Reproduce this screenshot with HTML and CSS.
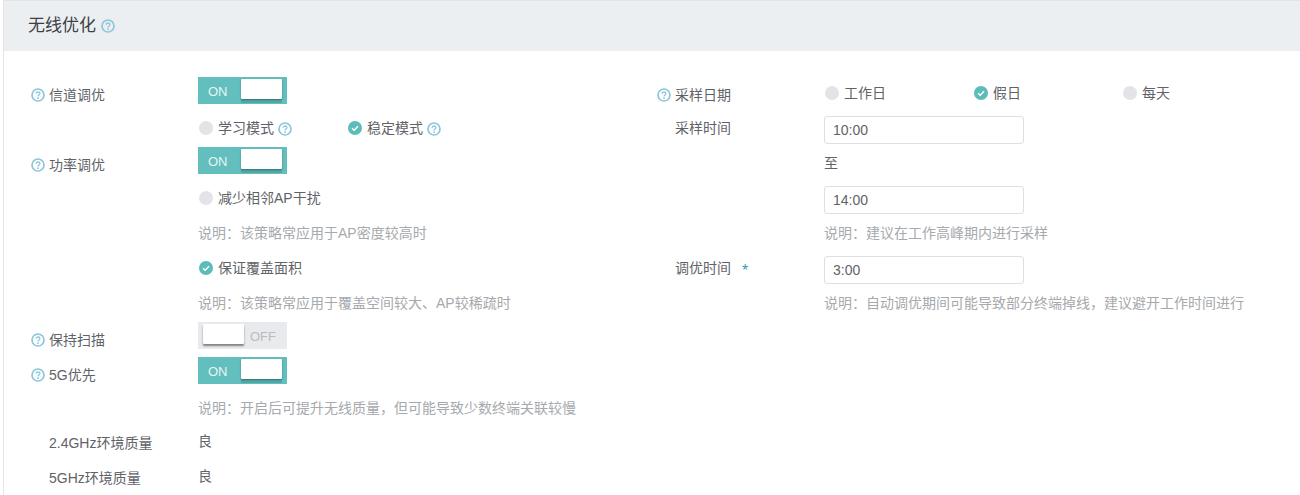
FILE: index.html
```html
<!DOCTYPE html>
<html lang="zh">
<head>
<meta charset="utf-8">
<title>无线优化</title>
<link rel="stylesheet" href="styles.css">
</head>
<body>
<svg class="defs" width="0" height="0" aria-hidden="true">
  <symbol id="q" viewBox="0 0 14 14">
    <circle cx="7" cy="7" r="6" fill="none" stroke="currentColor" stroke-width="1.7"/>
    <path d="M5.1 5.7C5.1 4.6 6 4 7 4s1.9.6 1.9 1.6c0 1.4-1.9 1.4-1.9 2.9" fill="none" stroke="currentColor" stroke-width="1.3"/>
    <circle cx="7" cy="10.2" r=".9" fill="currentColor"/>
  </symbol>
  <symbol id="check" viewBox="0 0 14 14">
    <circle cx="7" cy="7" r="7" fill="currentColor"/>
    <path d="M4 7.2l2.2 2L10 5.2" fill="none" stroke="#fff" stroke-width="1.4"/>
  </symbol>
</svg>
<main class="panel">
  <header class="head">
    <h1 class="title">无线优化</h1>
    <svg class="q q-title"><use href="#q"/></svg>
  </header>
  <div class="form">
    <section class="col">
      <div class="row">
        <div class="label low"><svg class="q"><use href="#q"/></svg>信道调优</div>
        <div class="switch on"><span class="state">ON</span><span class="knob"></span></div>
      </div>
      <div class="row">
        <div class="label"></div>
        <div class="radios">
          <div class="radio"><span class="dot"></span>学习模式<svg class="q q-inline"><use href="#q"/></svg></div>
          <div class="radio"><svg class="tick"><use href="#check"/></svg>稳定模式<svg class="q q-inline"><use href="#q"/></svg></div>
        </div>
      </div>
      <div class="row">
        <div class="label low"><svg class="q"><use href="#q"/></svg>功率调优</div>
        <div class="switch on"><span class="state">ON</span><span class="knob"></span></div>
      </div>
      <div class="row">
        <div class="label"></div>
        <div class="radio"><span class="dot"></span>减少相邻AP干扰</div>
      </div>
      <div class="row">
        <div class="label"></div>
        <p class="note">说明：该策略常应用于AP密度较高时</p>
      </div>
      <div class="row">
        <div class="label"></div>
        <div class="radio"><svg class="tick"><use href="#check"/></svg>保证覆盖面积</div>
      </div>
      <div class="row">
        <div class="label"></div>
        <p class="note">说明：该策略常应用于覆盖空间较大、AP较稀疏时</p>
      </div>
      <div class="row">
        <div class="label low"><svg class="q"><use href="#q"/></svg>保持扫描</div>
        <div class="switch off"><span class="knob"></span><span class="state">OFF</span></div>
      </div>
      <div class="row">
        <div class="label low"><svg class="q"><use href="#q"/></svg>5G优先</div>
        <div class="switch on"><span class="state">ON</span><span class="knob"></span></div>
      </div>
      <div class="row">
        <div class="label"></div>
        <p class="note">说明：开启后可提升无线质量，但可能导致少数终端关联较慢</p>
      </div>
      <div class="row">
        <div class="label plain">2.4GHz环境质量</div>
        <div class="value">良</div>
      </div>
      <div class="row">
        <div class="label plain">5GHz环境质量</div>
        <div class="value">良</div>
      </div>
    </section>
    <section class="col">
      <div class="row">
        <div class="label low"><svg class="q"><use href="#q"/></svg>采样日期</div>
        <div class="radios">
          <div class="radio"><span class="dot"></span>工作日</div>
          <div class="radio"><svg class="tick"><use href="#check"/></svg>假日</div>
          <div class="radio"><span class="dot"></span>每天</div>
        </div>
      </div>
      <div class="row">
        <div class="label plain-mid">采样时间</div>
        <input class="input" type="text" value="10:00">
      </div>
      <div class="row">
        <div class="label"></div>
        <div class="text">至</div>
      </div>
      <div class="row">
        <div class="label"></div>
        <input class="input" type="text" value="14:00">
      </div>
      <div class="row">
        <div class="label"></div>
        <p class="note">说明：建议在工作高峰期内进行采样</p>
      </div>
      <div class="row">
        <div class="label plain-mid">调优时间<span class="star">*</span></div>
        <input class="input" type="text" value="3:00">
      </div>
      <div class="row">
        <div class="label"></div>
        <p class="note">说明：自动调优期间可能导致部分终端掉线，建议避开工作时间进行</p>
      </div>
    </section>
  </div>
</main>
</body>
</html>
```
FILE: styles.css
```css
html, body {
  margin: 0;
  height: 495px;
  overflow: hidden;
  background: #fff;
}
body {
  padding-left: 3px;
  font-family: "Liberation Sans", "Noto Sans CJK SC", sans-serif;
  font-size: 14px;
  line-height: 20px;
  color: #5f6368;
}
.defs {
  position: absolute;
}
.panel {
  border-top: 1px solid #e2e4e7;
  border-left: 1px solid #e2e4e7;
}
.head {
  display: flex;
  align-items: center;
  height: 50px;
  padding-left: 24px;
  background: #eceff2;
}
.title {
  margin: 0;
  font-size: 17px;
  font-weight: 400;
  line-height: 24px;
  color: #3c3f44;
}
.q {
  flex: none;
  width: 14px;
  height: 14px;
  color: #8cc6dd;
}
.q-title {
  margin-left: 5px;
}
.q-inline {
  margin: 2px 0 0 4px;
}
.form {
  display: grid;
  grid-template-columns: 626px 1fr;
  padding: 26px 0 0 27px;
}
.row {
  display: flex;
  align-items: flex-start;
  height: 35px;
}
.label {
  flex: none;
  display: flex;
  align-items: center;
  gap: 4px;
  width: 167px;
  box-sizing: border-box;
}
.low {
  padding-top: 8px;
}
.plain {
  padding: 6px 0 0 18px;
}
.plain-mid {
  padding: 6px 0 0 18px;
}
.star {
  margin-left: 7px;
  font-size: 16px;
  line-height: 16px;
  color: #3a9bb8;
  transform: translateY(3px);
}
.switch {
  display: flex;
  align-items: center;
  box-sizing: border-box;
  width: 89px;
  height: 27px;
  font-size: 13px;
}
.state {
  padding-top: 2px;
}
.on {
  padding: 0 5px 0 10px;
  justify-content: space-between;
  background: #62bfbd;
  color: #e6f6f5;
}
.off {
  padding: 0 11px 0 5px;
  justify-content: space-between;
  background: #e8eaed;
  color: #b9bcc0;
}
.knob {
  width: 41px;
  height: 20px;
  margin-top: -3px;
  border-radius: 1px;
  background: #fff;
}
.on .knob {
  box-shadow: 0 1px 2px rgba(0, 0, 0, .35), 0 4px 0 rgba(0, 70, 70, .18);
}
.off .knob {
  box-shadow: 0 2px 2px rgba(0, 0, 0, .45);
}
.radios {
  display: grid;
  grid-auto-flow: column;
  grid-auto-columns: 149px;
}
.radio {
  display: flex;
  align-items: center;
  padding: 6px 0 0 1px;
}
.dot, .tick {
  flex: none;
  width: 14px;
  height: 14px;
  margin-right: 5px;
}
.dot {
  border-radius: 50%;
  background: #e2e4e7;
}
.tick {
  color: #5cbcba;
}
.note {
  margin: 6px 0 0;
  color: #a6a9ad;
  white-space: nowrap;
}
.value {
  padding-top: 4px;
}
.text {
  padding-top: 6px;
}
.input {
  box-sizing: border-box;
  width: 200px;
  height: 28px;
  margin: 4px 0 0;
  padding: 0 8px;
  border: 1px solid #dcdfe3;
  border-radius: 3px;
  font: inherit;
  color: #5f6368;
  background: #fff;
}
```
